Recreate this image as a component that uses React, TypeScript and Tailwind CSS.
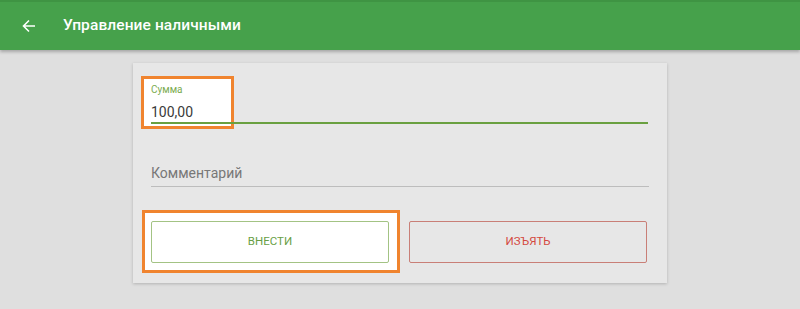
import React from "react";

export default function App() {
  return (
    <div
      className="w-[800px] h-[309px] bg-[#dfdfdf] overflow-hidden"
      style={{ fontFamily: "Roboto, 'Liberation Sans', sans-serif" }}
    >
      <header className="h-[50px] bg-[#46a14b] border-t-2 border-[#3f9443] flex items-center shadow-[0_2px_3px_rgba(0,0,0,0.25)] relative z-10">
        <svg width="14" height="14" viewBox="0 0 14 14" className="ml-[22px]" fill="none" stroke="white" strokeWidth="1.6">
          <path d="M13 7H1.5M7 1.5L1.5 7L7 12.5" />
        </svg>
        <span className="ml-[27px] text-white text-[15.5px] font-medium tracking-[0.1px]">Управление наличными</span>
      </header>
      <div className="mx-auto mt-[13px] w-[534px] bg-[#e7e7e7] shadow-[0_1px_3px_rgba(0,0,0,0.2)] relative px-[18px] pb-[20px]">
        <div className="absolute left-[8px] top-[13px] w-[93px] h-[53px] bg-white border-[3px] border-[#f0842f]" />
        <div className="absolute left-[9px] top-[147px] w-[258px] h-[63px] bg-white border-[3px] border-[#f0842f]" />
        <div className="relative pt-[21px]">
          <div className="text-[10px] leading-[12px] text-[#7aab4f]">Сумма</div>
          <div className="mt-[7px] text-[14px] leading-[18px] text-[#3a3a3a]">100,00</div>
          <div className="mt-[1px] h-[2px] bg-[#6aa040] mr-[1px]" />
        </div>
        <div className="relative mt-[41px]">
          <div className="text-[14px] leading-[16px] text-[#777]">Комментарий</div>
          <div className="mt-[5px] h-px bg-[#bdbdbd]" />
        </div>
        <div className="relative mt-[34px] flex gap-[20px]">
          <button className="w-[238px] h-[42px] bg-white border border-[#a3c384] rounded-[2px] text-[11.5px] font-normal uppercase text-[#6a9f45]">
            Внести
          </button>
          <button className="w-[238px] h-[42px] border border-[#c97f77] rounded-[2px] text-[11.5px] font-normal uppercase text-[#d4493f]">
            Изъять
          </button>
        </div>
      </div>
    </div>
  );
}
